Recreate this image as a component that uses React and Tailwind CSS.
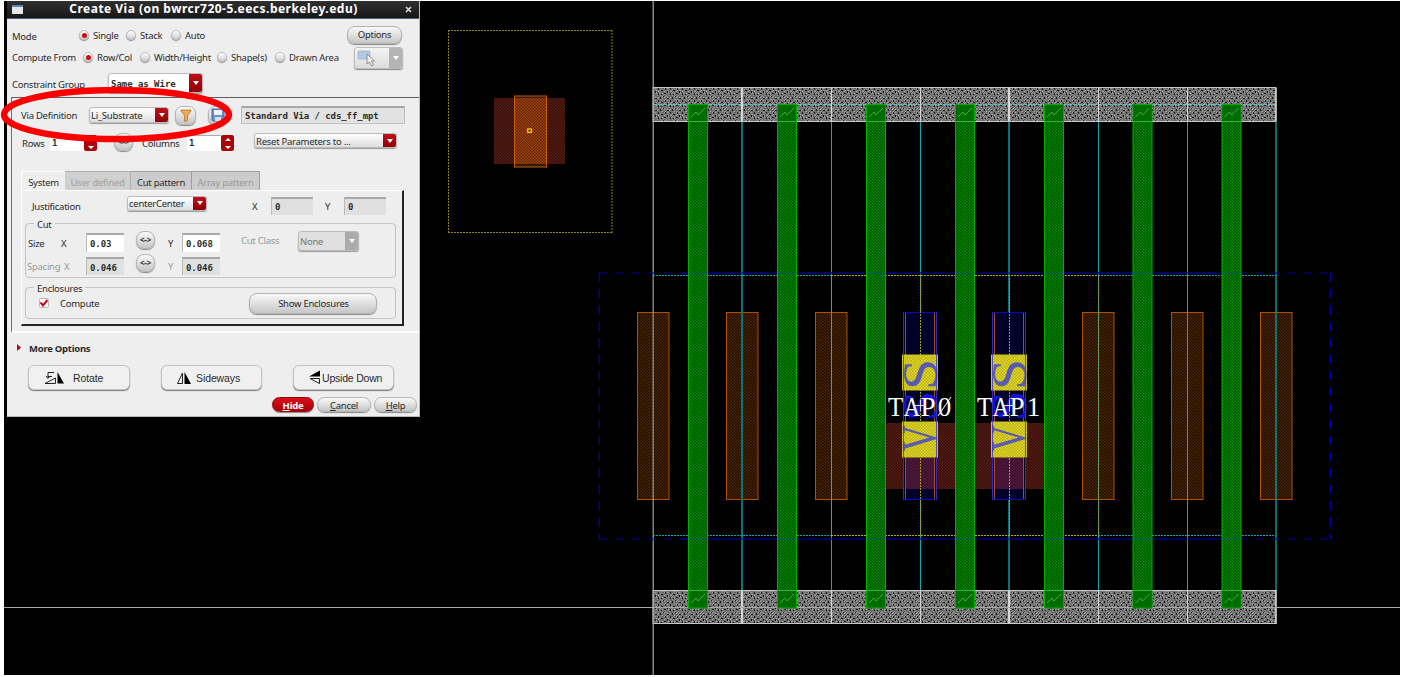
import React from "react";

const TRACKS = [
  { x: 742, soft: true },
  { x: 831 },
  { x: 920 },
  { x: 1009, soft: true },
  { x: 1098 },
  { x: 1187 },
];
const GATES = [698, 787, 876, 965, 1054, 1142.5, 1231.5];
const DIFFS = [637.5, 726.5, 815.5, 1082.5, 1171.5, 1260.5];
const TAPS = [920, 1009];

function Tap({ x, index }) {
  return (
    <g>
      <rect x={x - 16.5} y={312.5} width={33} height={187} fill="url(#navy)" stroke="#0a0ac0" />
      <path d={`M${x - 14.5} 313V499M${x + 14.5} 313V499`} stroke="#a0501c" />
      <rect x={x - 14} y={423} width={28} height={66} fill="url(#purple)" />
      <g fill="#1414d8" fontFamily="Liberation Serif, serif" fontSize={50} textAnchor="middle">
        <text transform={`translate(${x + 16.5} 406) rotate(-90) scale(1.1 1)`}>S</text>
      </g>
      <path d={`M${x + 0.5} 275V536`} stroke="#a8a018" strokeDasharray="2 1" />
      <rect x={x - 18} y={354.5} width={36} height={36} fill="url(#yellow)" />
      <rect x={x - 18} y={421.5} width={36} height={36} fill="url(#yellow)" />
      <g fill="#5a5ab0" fontFamily="Liberation Serif, serif" fontSize={50} textAnchor="middle">
        <text transform={`translate(${x + 16.5} 374.5) rotate(-90) scale(1.12 1)`}>S</text>
        <text transform={`translate(${x + 16} 438.5) rotate(-90) scale(.74 1)`}>V</text>
      </g>
      <path d={`M${x - 16.5} 312.5V499.5M${x + 16.5} 312.5V499.5`} stroke="#3c32c8" strokeOpacity=".8" />
      <g fill="#fff" fontFamily="Liberation Serif, serif" fontSize={27} textAnchor="middle">
        <text transform={`translate(${x - 24.5} 415.5) scale(.92 1)`}>T</text>
        <text transform={`translate(${x - 8} 415.5) scale(.84 1)`}>A</text>
        <text transform={`translate(${x + 8} 415.5) scale(1 1)`}>P</text>
        <text transform={`translate(${x + 24.5} 415.5)`}>{index}</text>
      </g>
      {index === 0 && <path d={`M${x + 18} 416L${x + 31} 397`} stroke="#fff" />}
      <path d={`M${x - 5} 405.5H${x + 6}M${x + 0.5} 400V411`} stroke="#ddd" />
    </g>
  );
}

function Layout() {
  return (
    <svg width="1396" height="674" viewBox="4 1 1396 674" className="block bg-black">
      <defs>
        <pattern id="rust" width="3" height="3" patternUnits="userSpaceOnUse">
          <rect width="3" height="3" fill="#280d09" />
          <path d="M0 0h1.5v1.5H0zM1.5 1.5H3V3H1.5z" fill="#641e13" />
        </pattern>
        <pattern id="orange" width="3" height="3" patternUnits="userSpaceOnUse">
          <rect width="3" height="3" fill="#120800" />
          <path d="M0 0h1.5v1.5H0zM1.5 1.5H3V3H1.5z" fill="#552800" />
        </pattern>
        <pattern id="hot" width="3" height="3" patternUnits="userSpaceOnUse">
          <rect width="3" height="3" fill="#5a2006" />
          <path d="M0 0h1.5v1.5H0zM1.5 1.5H3V3H1.5z" fill="#a8480c" />
        </pattern>
        <pattern id="green" width="3" height="3" patternUnits="userSpaceOnUse">
          <rect width="3" height="3" fill="#004a00" />
          <path d="M0 0h1.5v1.5H0zM1.5 1.5H3V3H1.5z" fill="#009000" />
        </pattern>
        <pattern id="navy" width="3" height="3" patternUnits="userSpaceOnUse">
          <rect width="3" height="3" fill="#000012" />
          <path d="M0 0h1.5v1.5H0zM1.5 1.5H3V3H1.5z" fill="#000040" />
        </pattern>
        <pattern id="purple" width="3" height="3" patternUnits="userSpaceOnUse">
          <rect width="3" height="3" fill="#300e2c" />
          <path d="M0 0h1.5v1.5H0zM1.5 1.5H3V3H1.5z" fill="#5c1a3c" />
        </pattern>
        <pattern id="yellow" width="3" height="3" patternUnits="userSpaceOnUse">
          <rect width="3" height="3" fill="#b4ac28" />
          <path d="M0 0h1.5v1.5H0zM1.5 1.5H3V3H1.5z" fill="#e6dc18" />
        </pattern>
        <pattern id="metal" width="12" height="12" patternUnits="userSpaceOnUse">
          <rect width="12" height="12" fill="#606060" />
          <path
            d="M-1 1L1-1M-1 4L4-1M-1 7L7-1M-1 10L10-1M-1 13L13-1M2 13L13 2M5 13L13 5M8 13L13 8M11 13L13 11"
            stroke="#a8a8a8"
            strokeWidth="1.1"
            strokeDasharray="2.4 1.2"
          />
          <path
            d="M0 1h1v2H0zM3 0h1v1H3zM7 2h2v1H7zM10 4h1v2h-1zM5 4h1v2H5zM1 6h2v1H1zM7 7h1v2H7zM4 9h2v1H4zM10 9h1v2h-1zM1 10h1v1H1z"
            fill="#161616"
          />
        </pattern>
      </defs>

      <path d="M448 30.5H612M448 232.5H612" stroke="#8c8410" strokeDasharray="2 1" />
      <path d="M448.5 30V233M612 30V233" stroke="#8c8410" strokeDasharray="2 1" />
      <rect x="494" y="98" width="71" height="66" fill="url(#rust)" />
      <rect x="514.5" y="96" width="32" height="71" fill="url(#orange)" />
      <rect x="514.5" y="98" width="32" height="66" fill="url(#hot)" />
      <rect x="514.5" y="96" width="32" height="71" fill="none" stroke="#c45e08" />
      <path d="M526 130.5h8" stroke="#e02010" strokeWidth="2" />
      <rect x="527.8" y="129" width="3.4" height="3.4" fill="#402000" stroke="#ffd000" strokeWidth="1.3" />

      <rect x="653" y="87.5" width="623" height="34" fill="url(#metal)" stroke="#c8c8c8" />
      <rect x="653" y="590.5" width="623" height="33" fill="url(#metal)" stroke="#c8c8c8" />
      <path d="M653 104.5H1276" stroke="#62c0c8" strokeDasharray="4 1" />

      {DIFFS.map((x) => (
        <rect key={x} x={x} y="312.5" width="31.5" height="187" fill="url(#orange)" stroke="#ac5200" />
      ))}
      {TRACKS.map(({ x, soft }) => (
        <g key={x} strokeWidth={soft ? 2 : 1}>
          <path d={`M${soft ? x : x + 0.5} 122V590`} stroke={soft ? "#067478" : "#0aacb0"} />
          <path d={`M${soft ? x : x + 0.5} 88V121M${soft ? x : x + 0.5} 591V624`} stroke="#d4d4d4" />
        </g>
      ))}
      <path d="M1276 122V590" stroke="#0b8f92" strokeWidth="1.5" />
      <path d="M1276 88V121M1276 590V624" stroke="#eee" />
      <path d="M831.5 275V536M1098.5 275V536" stroke="#96921c" strokeDasharray="2 1" />
      <path d="M4 607.5H1400M653.2 1V675" stroke="#a8a8a8" strokeWidth="1.2" />
      <path d="M653.5 275V536" stroke="#0b9698" strokeDasharray="1.5 1.5" />

      {TAPS.map((x) => (
        <rect key={x} x={x - 35} y="423" width="71" height="66" fill="url(#rust)" />
      ))}
      <path d="M599 273H1331" stroke="#0000a0" strokeDasharray="9 7" />
      <path d="M680 273H1240M680 539H1240" stroke="#000090" />
      <path d="M599 539H1331" stroke="#0000a0" strokeDasharray="9 7" />
      <path d="M599.3 273V539M1330.5 273V539" stroke="#0000b4" strokeWidth="1.3" strokeDasharray="9 7.3" />
      <path d="M653 275.5H831M653 535.5H831M1098 275.5H1276M1098 535.5H1276" stroke="#14a0a2" strokeDasharray="2 1" />
      <path d="M831 275.5H1098M831 535.5H1098" stroke="#b4aa14" strokeDasharray="2 1" />

      {TAPS.map((x, i) => (
        <Tap key={x} x={x} index={i} />
      ))}

      {GATES.map((x) => (
        <g key={x}>
          <rect x={x - 9.5} y="104.5" width="19" height="503.5" fill="url(#green)" stroke="#00b000" />
          <rect x={x - 9} y="105" width="18" height="16" fill="#006c00" fillOpacity=".75" />
          <rect x={x - 9} y="591" width="18" height="16" fill="#006c00" fillOpacity=".75" />
          <path
            d={`M${x - 7} 117l5-5 2 3 7-7M${x - 7} 603l5-5 2 3 7-7M${x - 9} 121.5h18M${x - 9} 590.5h18`}
            stroke="#35b43a"
            fill="none"
          />
          <path d={`M${x - 9} 273h18M${x - 9} 539h18`} stroke="#005a78" strokeOpacity=".8" />
        </g>
      ))}
    </svg>
  );
}

const btn =
  "flex shrink-0 items-center justify-center whitespace-nowrap border border-[#b4b4b4] bg-linear-to-b from-[#fafafa] to-[#c6c6c6] shadow-[0_1px_1px_#888]";

function Arrow({ className = "" }) {
  return (
    <span className={`flex w-[13px] shrink-0 items-center justify-center self-stretch ${className}`}>
      <svg width="6" height="4" viewBox="0 0 6 4">
        <path d="M0 0h6L3 4z" fill="#fff" />
      </svg>
    </span>
  );
}

function Combo({ className = "", children, disabled = false }) {
  return (
    <div
      className={`flex shrink-0 items-center overflow-hidden rounded-[3px] border border-[#bbb] shadow-[0_1px_1px_#999] ${className}`}
    >
      <span className="grow whitespace-nowrap pt-[2px] pl-px">{children}</span>
      <Arrow className={disabled ? "bg-[#ababab]" : "bg-linear-to-b from-[#c01018] to-[#900008]"} />
    </div>
  );
}

function Field({ className = "", children }) {
  return (
    <div
      className={`flex shrink-0 items-center whitespace-pre border-t-2 border-l border-t-[#a8a8a8] border-l-[#bbb] pt-px pl-[3px] font-['DejaVu_Sans_Mono',monospace] text-[9px] font-bold tracking-[-0.07px] text-[#2c2c2c] ${className}`}
    >
      {children}
    </div>
  );
}

function Radio({ on = false, label, width }) {
  return (
    <div className="flex shrink-0 items-center">
      <span className="flex size-[10px] shrink-0 items-center justify-center rounded-full border border-[#bbb] bg-linear-to-b from-white to-[#ccc] shadow-[0_1px_1px_#888]">
        {on && <span className="size-[5px] rounded-full bg-[#cc0812]" />}
      </span>
      <span className={`ml-[4px] whitespace-nowrap pt-[2px] ${width}`}>{label}</span>
    </div>
  );
}

function Spin({ value }) {
  return (
    <div className="flex h-[16px] w-[47px] shrink-0 bg-white">
      <span className="grow border-t border-[#aaa] pl-[2px] font-['DejaVu_Sans_Mono',monospace] text-[9px] leading-[15px] font-bold">
        {value}
      </span>
      <span className="flex w-[13px] flex-col items-center justify-center rounded-[2px] bg-[#a8040c]">
        <svg width="6" height="11" viewBox="0 0 6 11" fill="#fff">
          <path d="M0 3h6L3 0zM0 8h6L3 11z" />
        </svg>
      </span>
    </div>
  );
}

function Swap({ className = "" }) {
  return (
    <div className={`h-[18px] w-[19px] rounded-[8px] text-[8px] font-bold ${btn} ${className}`}>{"<->"}</div>
  );
}

function Dialog() {
  return (
    <section className="absolute top-[1px] left-[7px] flex h-[416px] w-[413px] flex-col border-r border-b border-[#bbb] bg-[#eeeeee] font-['Noto_Sans','Open_Sans',sans-serif] text-[9.5px] leading-[14px] tracking-[-0.26px] text-[#2a2a2a]">
      <header className="flex h-[18px] shrink-0 items-center border-b border-[#536079] bg-linear-to-b from-[#303030] to-[#181818] text-white">
        <span className="ml-[5px] h-[9px] w-[11px] border-t-2 border-[#5a84c0] bg-[#e4e8e8]" />
        <h1 className="ml-[46px] w-[289px] pb-px text-center text-[12px] leading-[16px] font-bold tracking-[0.48px] whitespace-nowrap">
          Create Via (on bwrcr720-5.eecs.berkeley.edu)
        </h1>
        <svg className="ml-[47px]" width="7" height="7" viewBox="0 0 7 7" stroke="#ddd" strokeWidth="1.6">
          <path d="M1 1l5 5M6 1L1 6" />
        </svg>
      </header>

      <div className="flex h-[78px] shrink-0 pl-[4px]">
        <div className="flex w-[335px] flex-col">
          <div className="mt-[6px] flex h-[20px] items-center">
            <span className="w-[68px] pt-[3px] pl-px">Mode</span>
            <Radio on label="Single" width="w-[33px]" />
            <Radio label="Stack" width="w-[31px]" />
            <Radio label="Auto" width="w-[30px]" />
          </div>
          <div className="mt-[2px] flex h-[20px] items-center">
            <span className="w-[72px] whitespace-nowrap pt-px pl-px">Compute From</span>
            <Radio on label="Row/Col" width="w-[43px]" />
            <Radio label="Width/Height" width="w-[63px]" />
            <Radio label="Shape(s)" width="w-[44px]" />
            <Radio label="Drawn Area" width="w-[52px]" />
          </div>
          <div className="mt-[6px] flex h-[20px] items-center">
            <span className="w-[97px] whitespace-nowrap pt-[3px] pl-px">Constraint Group</span>
            <Combo className="h-[20px] w-[95px] bg-white pl-px font-['DejaVu_Sans_Mono',monospace] text-[9px] font-bold tracking-[-0.03px]">
              Same as Wire
            </Combo>
          </div>
        </div>
        <div className="flex flex-col pt-[7px] pl-px">
          <div className={`h-[18px] w-[55px] rounded-[8px] ${btn}`}>Options</div>
          <div className="mt-[3px] ml-[7px] flex h-[22px] w-[49px] overflow-hidden rounded-[3px] border border-[#bbb] bg-linear-to-b from-[#f4f4f4] to-[#dcdcdc] shadow-[0_1px_1px_#888]">
            <svg width="34" height="20" viewBox="0 0 34 20">
              <rect x="3" y="3" width="12" height="8" rx="1" fill="#b5c8e4" stroke="#98acd0" strokeWidth=".7" />
              <path d="M12 6v10l2.500-2 2 4 2-1-2-4h3z" fill="#eee" stroke="#888" strokeWidth=".9" />
            </svg>
            <Arrow className="bg-[#b4b4b4]" />
          </div>
        </div>
      </div>

      <div className="ml-[4px] flex h-[236px] shrink-0 flex-col border-t-[1.5px] border-b-2 border-l-[1.5px] border-t-[#606060] border-b-white border-l-[#707070]">
        <div className="mt-[7px] flex h-[20px] shrink-0 items-center pl-[9px]">
          <span className="w-[68px] whitespace-nowrap pt-[2px]">Via Definition</span>
          <Combo className="h-[16px] w-[80px] bg-linear-to-b from-white to-[#dedede]">Li_Substrate</Combo>
          <div className={`ml-[6px] h-[19px] w-[21px] rounded-[7px] ${btn}`}>
            <svg width="12" height="13" viewBox="0 0 12 13">
              <path d="M1 1h10v1L7.500 6.500v5l-3 1v-6L1 2z" fill="#eda850" stroke="#bd7626" strokeWidth=".8" />
            </svg>
          </div>
          <div className={`ml-[12px] h-[19px] w-[20px] rounded-[7px] ${btn}`}>
            <svg width="14" height="14" viewBox="0 0 14 14">
              <path d="M1 1h12v12H2L1 12z" fill="#6f8fce" stroke="#46609c" />
              <path d="M3 2h8v5H3z" fill="#eef2fa" />
              <path d="M4 9h6v4H4z" fill="#d5deed" />
            </svg>
          </div>
          <Field className="ml-[13px] h-[18px] w-[164px] border border-[#c0c0c0] bg-[#e2e2e2]">
            Standard Via / cds_ff_mpt
          </Field>
        </div>
        <div className="mt-[8px] flex h-[20px] shrink-0 items-center pl-[9px]">
          <span className="w-[29px] pt-px pl-px">Rows</span>
          <Spin value="1" />
          <Swap className="mb-[2px] ml-[17px]" />
          <span className="ml-[9px] w-[45px] pt-px">Columns</span>
          <Spin value="1" />
          <Combo className="mb-[5px] ml-[20px] h-[15px] w-[143px] bg-linear-to-b from-white to-[#dedede]">
            Reset Parameters to ...
          </Combo>
        </div>

        <div className="mt-[18px] ml-[9px] flex h-[19px] w-[239px] shrink-0 text-center leading-[21px] whitespace-nowrap">
          <span className="w-[44px] border-t border-l border-white bg-[#eeeeee]">System</span>
          <span className="w-[66px] border-t border-r border-[#b0b0b0] bg-[#d0d0d0] text-[#a0a0a0]">User defined</span>
          <span className="w-[61px] border-t border-r border-[#a0a0a0] bg-[#cccccc]">Cut pattern</span>
          <span className="w-[68px] border-t border-r border-[#a0a0a0] bg-[#cccccc] text-[#9a9a9a]">Array pattern</span>
        </div>
        <div className="ml-[9px] flex h-[136px] w-[383px] shrink-0 flex-col border-t border-r-2 border-b-2 border-l border-t-white border-r-[#242424] border-b-[#242424] border-l-white">
          <div className="mt-[4px] flex h-[20px] shrink-0 items-center pl-[9px]">
            <span className="w-[96px] pt-[4px] pl-px">Justification</span>
            <Combo className="mb-[4px] h-[15px] w-[80px] bg-linear-to-b from-white to-[#dedede]">centerCenter</Combo>
            <span className="ml-[45px] w-[19px] pt-[3px]">X</span>
            <Field className="mt-px h-[18px] w-[42px] bg-[#e0e0e0]">0</Field>
            <span className="ml-[12px] w-[19px] pt-[3px]">Y</span>
            <Field className="mt-px h-[18px] w-[42px] bg-[#e0e0e0]">0</Field>
          </div>
          <fieldset className="mt-[1px] ml-[3px] flex h-[62px] w-[371px] shrink-0 flex-col rounded-[4px] border border-[#c4c4c4]">
            <legend className="ml-[8px] h-[14px] bg-[#eeeeee] px-[3px] leading-[18px]">Cut</legend>
            <div className="mt-[1px] flex h-[23px] shrink-0 items-center pl-[1px]">
              <span className="w-[34px] pt-[2px] pl-px">Size</span>
              <span className="w-[25px] pt-[2px]">X</span>
              <Field className="h-[19px] w-[38px] bg-white">0.03</Field>
              <Swap className="mb-[6px] ml-[12px]" />
              <span className="ml-[13px] w-[14px] pt-[2px]">Y</span>
              <Field className="h-[19px] w-[38px] bg-white">0.068</Field>
              <span className="mb-[4px] ml-[20px] w-[58px] pl-px text-[#999]">Cut Class</span>
              <Combo disabled className="mb-[3px] h-[20px] w-[61px] bg-[#e0e0e0] text-[#777]">
                None
              </Combo>
            </div>
            <div className="mt-[1px] flex h-[22px] shrink-0 items-center text-[#999]">
              <span className="w-[38px] pt-[2px] pl-px">Spacing</span>
              <span className="w-[22px] pt-[2px]">X</span>
              <Field className="h-[18px] w-[38px] bg-[#e0e0e0]">0.046</Field>
              <Swap className="mb-[6px] ml-[12px] text-[#333]" />
              <span className="ml-[13px] w-[14px] pt-[2px]">Y</span>
              <Field className="h-[18px] w-[38px] bg-[#e0e0e0]">0.046</Field>
            </div>
          </fieldset>
          <fieldset className="mt-[2px] ml-[3px] flex h-[39px] w-[371px] shrink-0 rounded-[4px] border border-[#c4c4c4]">
            <legend className="ml-[8px] h-[14px] bg-[#eeeeee] px-[3px] leading-[18px]">Enclosures</legend>
            <div className="mt-[2px] flex h-[14px] items-center pl-[13px]">
              <span className="flex size-[10px] items-center justify-center rounded-[2px] border border-[#bbb] bg-white">
                <svg width="8" height="8" viewBox="0 0 8 8" fill="none" stroke="#d0040c" strokeWidth="2">
                  <path d="M0.5 3.5L3 6.5L7.5 1" />
                </svg>
              </span>
              <span className="ml-[11px] w-[189px] pt-[2px]">Compute</span>
              <div className={`h-[21px] w-[128px] rounded-[8px] pt-px pl-px ${btn}`}>Show Enclosures</div>
            </div>
          </fieldset>
        </div>
      </div>

      <div className="mt-[7px] flex h-[16px] shrink-0 items-center pl-[10px] font-bold">
        <svg className="mb-px" width="4" height="7" viewBox="0 0 4 7">
          <path d="M0 0v7l4-3.5z" fill="#c00008" />
        </svg>
        <span className="ml-[8px] pt-px">More Options</span>
      </div>

      <div className="mt-[9px] flex h-[25px] shrink-0 pl-[21px] font-['Liberation_Sans',sans-serif] text-[10.5px] tracking-[-0.1px]">
        <div className="flex w-[102px] items-center rounded-[6px] border border-[#c4c4c4] bg-[#f0f0f0] pl-[15px] shadow-[0_1px_1px_#777]">
          <svg width="21" height="14" viewBox="0 0 21 14" fill="none" stroke="#222">
            <path d="M1 12.500h10.500V7zM4 7V1.500h6M2 5l2 2.500L6 5M4 5.500h4" />
            <path d="M13.500 1v11.500H20z" fill="#000" stroke="none" />
          </svg>
          <span className="ml-[8px] pt-px">Rotate</span>
        </div>
        <div className="ml-[31px] flex w-[101px] items-center rounded-[6px] border border-[#c4c4c4] bg-[#f0f0f0] pl-[14px] shadow-[0_1px_1px_#777]">
          <svg width="16" height="14" viewBox="0 0 16 14" fill="none" stroke="#222">
            <path d="M1.500 12.500H6.500V2z" />
            <path d="M8.500 1v12H15z" fill="#000" stroke="none" />
          </svg>
          <span className="ml-[4px] pt-px">Sideways</span>
        </div>
        <div className="ml-[31px] flex w-[101px] items-center rounded-[6px] border border-[#c4c4c4] bg-[#f0f0f0] pl-[14px] whitespace-nowrap shadow-[0_1px_1px_#777]">
          <svg width="14" height="15" viewBox="0 0 14 15" fill="none" stroke="#222">
            <path d="M12 .5V6.500H1z" fill="#000" stroke="none" />
            <path d="M11.500 13.500V8.500H2z" />
          </svg>
          <span className="pt-px tracking-[-0.2px]">Upside Down</span>
        </div>
      </div>

      <footer className="mt-[7px] flex h-[15px] shrink-0 justify-end gap-[3px] pr-[2px]">
        <div className="flex w-[42px] items-center justify-center rounded-[8px] border border-[#960008] bg-linear-to-b from-[#d8101c] to-[#a80008] pt-[2px] font-bold text-white shadow-[0_1px_1px_#888]">
          <span className="underline">H</span>ide
        </div>
        <div className={`w-[54px] rounded-[8px] pt-[2px] ${btn}`}>
          <span className="underline">C</span>ancel
        </div>
        <div className={`w-[43px] rounded-[8px] pt-[2px] ${btn}`}>
          <span className="underline">H</span>elp
        </div>
      </footer>
    </section>
  );
}

export default function App() {
  return (
    <main className="relative h-[677px] w-[1401px] overflow-hidden bg-white pt-px pl-1">
      <Layout />
      <Dialog />
      <svg className="pointer-events-none absolute top-[80px] left-0" width="240" height="70" viewBox="0 80 240 70">
        <ellipse cx="116.5" cy="114.5" rx="112.5" ry="24.5" fill="none" stroke="#fb0000" strokeWidth="6.5" />
      </svg>
    </main>
  );
}
